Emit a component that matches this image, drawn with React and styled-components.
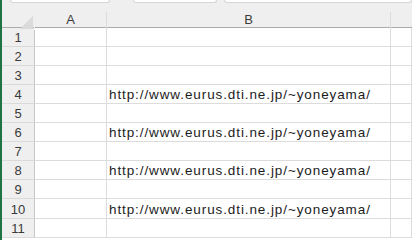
import styled, { createGlobalStyle } from 'styled-components';

const GlobalStyle = createGlobalStyle`
    html, body {
        margin: 0;
        padding: 0;
        background: #ffffff;
        font-family: "Liberation Sans", Arial, sans-serif;
    }
`;

const Window = styled.div`
    display: flex;
    width: 412px;
    height: 240px;
    overflow: hidden;
    background: #ffffff;
`;

const GreenEdge = styled.div`
    width: 2px;
    flex: none;
    background: #217346;
`;

const Sheet = styled.div`
    flex: 1;
    display: flex;
    flex-direction: column;
`;

const HeaderArea = styled.div`
    display: flex;
    flex-direction: column;
    height: 27px;
    background: #efefef;
    border-bottom: 1px solid #ababab;
`;

const TopStrip = styled.div`
    display: flex;
    height: 9px;
`;

const FormulaBox = styled.div`
    height: 2px;
    margin-left: ${({ $gap }) => $gap}px;
    width: ${({ $w }) => ($w ? `${$w}px` : 'auto')};
    flex: ${({ $w }) => ($w ? 'none' : '1')};
    background: #ffffff;
    border: 1px solid #d6d6d6;
    border-top: none;
    border-radius: 0 0 4px 4px;
`;

const Grid = styled.div`
    display: grid;
    grid-template-columns: 33px 72px 284px 1fr;
`;

const ColumnLabels = styled(Grid)`
    height: 18px;
`;

const Corner = styled.div`
    position: relative;
    border-right: 1px solid #efefef;
`;

const CornerTriangle = styled.div`
    position: absolute;
    right: 1px;
    bottom: 1px;
    width: 0;
    height: 0;
    border-left: 13px solid transparent;
    border-bottom: 13px solid #dadada;
`;

const ColumnLabel = styled.div`
    display: flex;
    align-items: center;
    justify-content: center;
    font-size: 13px;
    color: #3c3c3c;
    border-right: 1px solid ${({ $last }) => ($last ? 'transparent' : '#dcdcdc')};
    margin-top: 3px;
    padding-bottom: 3px;
`;

const Row = styled(Grid)`
    height: ${({ $h }) => $h}px;
`;

const RowNumber = styled.div`
    display: flex;
    align-items: center;
    justify-content: center;
    background: #efefef;
    border-right: 1px solid #c6c6c6;
    border-bottom: 1px solid #dadada;
    font-size: 13px;
    color: #3a3a3a;
    padding-top: 1px;
`;

const Cell = styled.div`
    display: flex;
    align-items: flex-end;
    border-right: 1px solid #dcdcdc;
    border-bottom: 1px solid #dcdcdc;
    padding: 0 0 1px 2px;
    font-size: 13.5px;
    letter-spacing: 0.9px;
    color: #1c1c1c;
    white-space: nowrap;
    overflow: visible;
`;

const URL = 'http://www.eurus.dti.ne.jp/~yoneyama/';

const rows = [1, 2, 3, 4, 5, 6, 7, 8, 9, 10, 11];
const linkRows = [4, 6, 8, 10];

function App() {
    return <>
        <GlobalStyle />
        <Window>
            <GreenEdge />
            <Sheet>
                <HeaderArea>
                    <TopStrip>
                        <FormulaBox $gap={8} $w={98} />
                        <FormulaBox $gap={23} $w={82} />
                        <FormulaBox $gap={7} />
                    </TopStrip>
                    <ColumnLabels>
                        <Corner>
                            <CornerTriangle />
                        </Corner>
                        <ColumnLabel>A</ColumnLabel>
                        <ColumnLabel>B</ColumnLabel>
                        <ColumnLabel $last />
                    </ColumnLabels>
                </HeaderArea>
                {rows.map(n => (
                    <Row key={n} $h={n === 10 ? 20 : 19}>
                        <RowNumber>{n}</RowNumber>
                        <Cell />
                        <Cell>{linkRows.includes(n) ? URL : ''}</Cell>
                        <Cell />
                    </Row>
                ))}
            </Sheet>
        </Window>
    </>
}

export default App;
